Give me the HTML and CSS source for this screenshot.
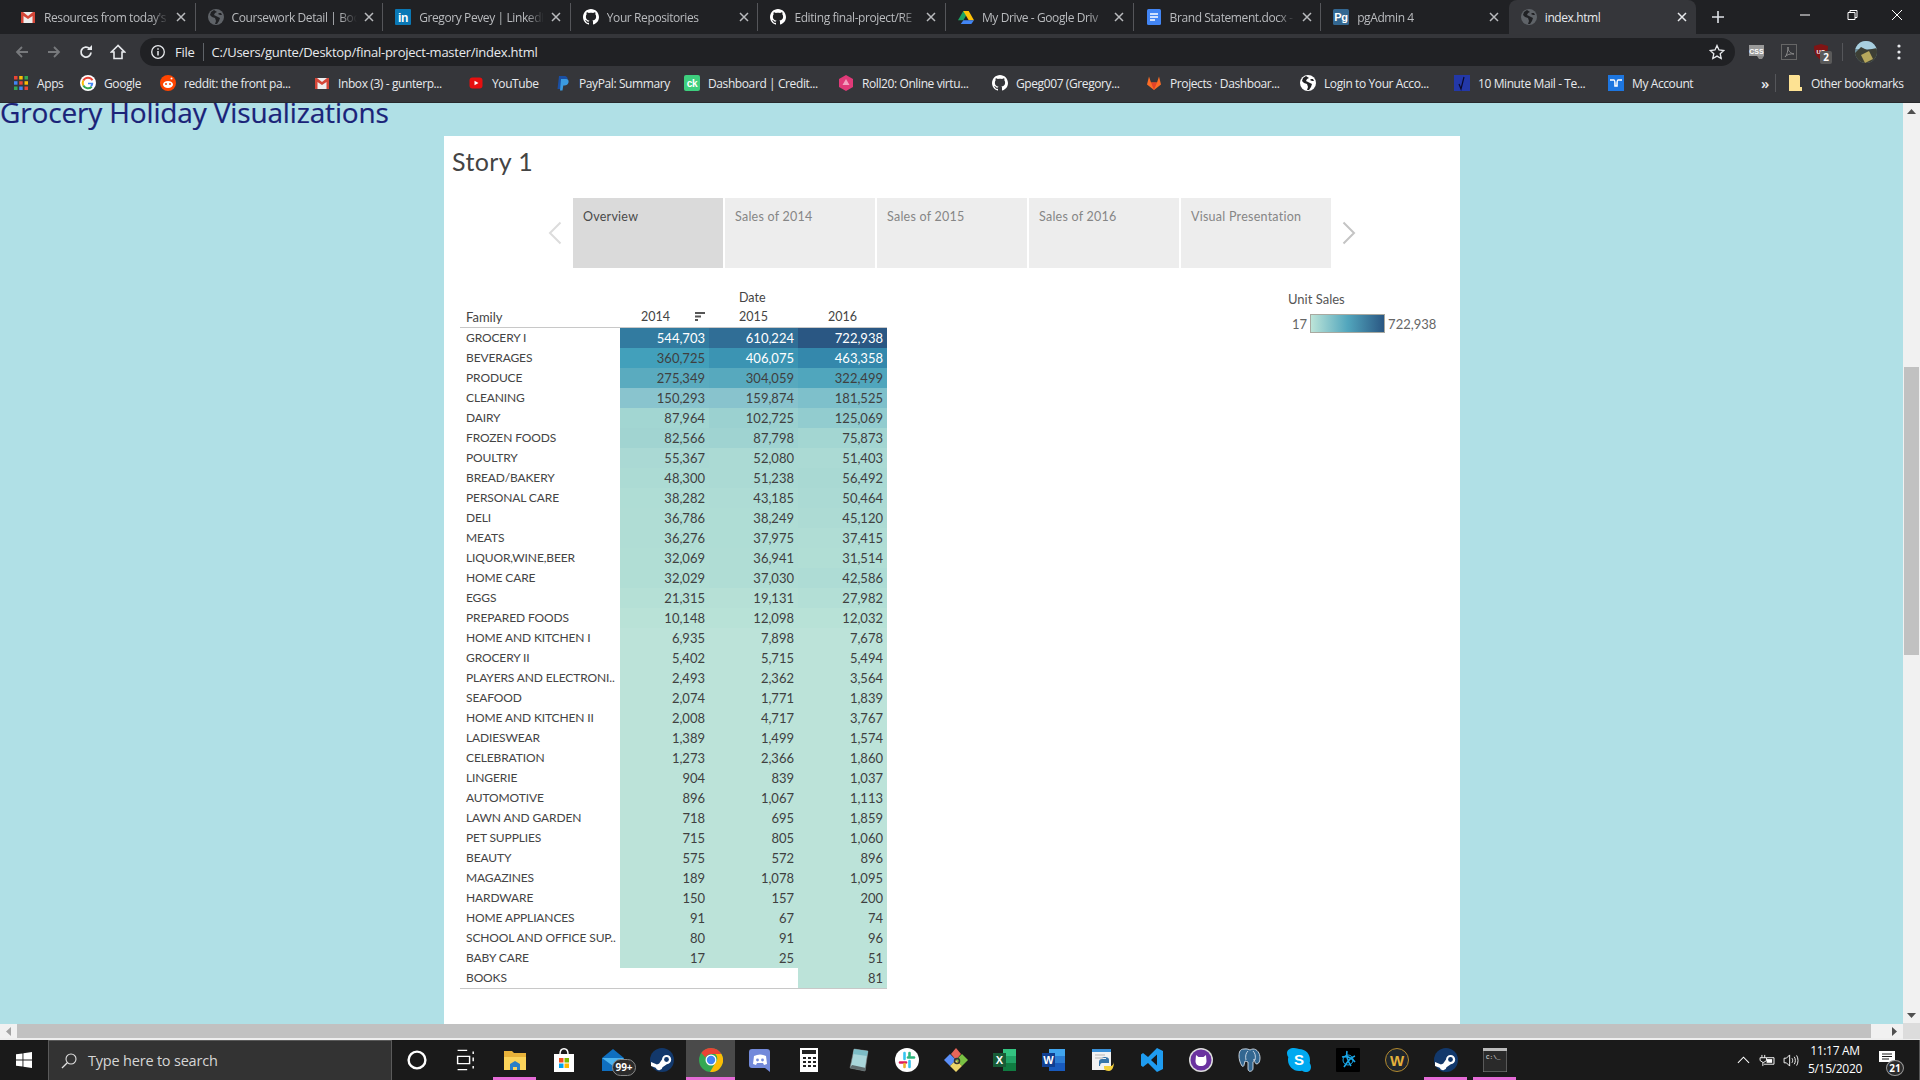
FILE: index.html
```html
<!DOCTYPE html>
<html lang="en">
<head>
<meta charset="utf-8">
<title>index.html</title>
<link rel="stylesheet" href="styles.css">
</head>
<body>
<svg class="defs" width="0" height="0" aria-hidden="true">
  <defs>
    <symbol id="gh" viewBox="0 0 16 16"><path fill="#fff" d="M8 0C3.600 0 0 3.600 0 8c0 3.500 2.300 6.500 5.500 7.600.4.100.5-.2.5-.4v-1.400c-2.200.5-2.700-1.100-2.700-1.100-.4-.9-.9-1.200-.9-1.200-.7-.5.100-.5.100-.5.800.1 1.200.8 1.200.8.700 1.200 1.900.9 2.300.7.100-.5.300-.9.500-1.100-1.800-.2-3.600-.9-3.600-4 0-.9.300-1.600.8-2.100-.1-.2-.4-1 .1-2.100 0 0 .7-.2 2.200.8.600-.2 1.300-.3 2-.3s1.400.1 2 .3c1.500-1 2.200-.8 2.200-.8.400 1.100.2 1.900.1 2.100.5.600.8 1.300.8 2.100 0 3.100-1.900 3.700-3.700 3.900.3.3.6.8.6 1.500v2.200c0 .2.100.5.600.4C13.700 14.500 16 11.500 16 8c0-4.400-3.600-8-8-8z"/></symbol>
    <symbol id="globe" viewBox="0 0 16 16"><circle cx="8" cy="8" r="8" fill="currentColor"/><path fill="#202124" d="M6 1 3 3l-1 3 2 2 3 1 1 3-1 3 2 0 2-3 1-3-4-2-2-1 1-2 2-1zM13 4l-2 0-1 1 2 1 2 0z"/></symbol>
    <symbol id="gmail" viewBox="0 0 16 16"><path fill="#eee" d="M1 3h14v11H1z"/><path fill="#d44638" d="M1 3h2l5 4 5-4h2v11h-2.500V7L8 10 3.500 7v7H1z"/></symbol>
    <symbol id="steam" viewBox="0 0 24 24"><circle cx="12" cy="12" r="12" fill="#12386b"/><path fill="#fff" d="M1 14l6 2.500a3.500 3.500 0 0 1 2-.7l3-4.300a4.600 4.600 0 1 1 4.800 4.700l-4.300 3a3.500 3.500 0 0 1-6.800.6L1 18z"/><circle cx="16.500" cy="11.500" r="2.400" fill="#12386b"/></symbol>
    <symbol id="x" viewBox="0 0 10 10"><path d="M1 1l8 8M9 1l-8 8" stroke="currentColor" stroke-width="1.500" fill="none"/></symbol>
  </defs>
</svg>

<header class="chrome">
  <div class="tabstrip">
    <div class="tab">
      <svg class="fav" viewBox="0 0 16 16"><use href="#gmail"/></svg>
      <span class="tab-title">Resources from today's</span>
      <svg class="tab-x"><use href="#x"/></svg>
    </div>
    <div class="tab">
      <svg class="fav globe-grey" viewBox="0 0 16 16"><use href="#globe"/></svg>
      <span class="tab-title">Coursework Detail | Boo</span>
      <svg class="tab-x"><use href="#x"/></svg>
    </div>
    <div class="tab">
      <svg class="fav" viewBox="0 0 16 16"><rect width="16" height="16" rx="1" fill="#0a78b5"/><text x="8" y="13" class="svg-bold" font-size="12" fill="#fff" text-anchor="middle">in</text></svg>
      <span class="tab-title">Gregory Pevey | LinkedI</span>
      <svg class="tab-x"><use href="#x"/></svg>
    </div>
    <div class="tab">
      <svg class="fav" viewBox="0 0 16 16"><use href="#gh"/></svg>
      <span class="tab-title">Your Repositories</span>
      <svg class="tab-x"><use href="#x"/></svg>
    </div>
    <div class="tab">
      <svg class="fav" viewBox="0 0 16 16"><use href="#gh"/></svg>
      <span class="tab-title">Editing final-project/RE</span>
      <svg class="tab-x"><use href="#x"/></svg>
    </div>
    <div class="tab">
      <svg class="fav" viewBox="0 0 16 16"><path fill="#1ea362" d="M5.300 2h5.400L5.400 11.300H0z"/><path fill="#ffc107" d="M10.700 2 16 11.300h-5.300L5.300 2z"/><path fill="#4285f4" d="M2.700 15 5.400 11.300H16L13.300 15z"/></svg>
      <span class="tab-title">My Drive - Google Driv</span>
      <svg class="tab-x"><use href="#x"/></svg>
    </div>
    <div class="tab">
      <svg class="fav" viewBox="0 0 16 16"><rect x="1" width="14" height="16" rx="1.500" fill="#4285f4"/><path stroke="#fff" stroke-width="1.500" d="M4 5h8M4 8h8M4 11h5"/></svg>
      <span class="tab-title">Brand Statement.docx -</span>
      <svg class="tab-x"><use href="#x"/></svg>
    </div>
    <div class="tab">
      <svg class="fav" viewBox="0 0 16 16"><rect width="16" height="16" rx="1.500" fill="#336791"/><text x="8" y="12" class="svg-bold" font-size="11" fill="#fff" text-anchor="middle">Pg</text></svg>
      <span class="tab-title">pgAdmin 4</span>
      <svg class="tab-x"><use href="#x"/></svg>
    </div>
    <div class="tab tab-active">
      <svg class="fav globe-grey" viewBox="0 0 16 16"><use href="#globe"/></svg>
      <span class="tab-title">index.html</span>
      <svg class="tab-x"><use href="#x"/></svg>
    </div>
    <svg class="newtab" viewBox="0 0 12 12"><path d="M6 0v12M0 6h12" stroke="#dee1e6" stroke-width="1.600"/></svg>
    <div class="winctl">
      <svg viewBox="0 0 46 30"><path d="M18 15h10" stroke="#fff"/></svg>
      <svg viewBox="0 0 46 30"><path d="M20 12.500h7v7h-7zM22 12.500v-2h7v7h-2" stroke="#fff" fill="none"/></svg>
      <svg viewBox="0 0 46 30"><path d="M18 10l10 10M28 10L18 20" stroke="#fff" fill="none"/></svg>
    </div>
  </div>

  <div class="toolbar">
    <div class="navbtns">
      <svg viewBox="0 0 16 16"><path d="M14 8H3M8 3 3 8l5 5" stroke="#77797c" stroke-width="1.800" fill="none"/></svg>
      <svg viewBox="0 0 16 16"><path d="M2 8h11M8 3l5 5-5 5" stroke="#77797c" stroke-width="1.800" fill="none"/></svg>
      <svg viewBox="0 0 16 16"><path d="M13 8.500A5 5 0 1 1 11.500 4.500" stroke="#e8eaed" stroke-width="1.800" fill="none"/><path d="M14 1v5H9z" fill="#e8eaed"/></svg>
      <svg viewBox="0 0 16 16"><path d="M8 1.500 1.500 8H4v6.500h8V8h2.500z" stroke="#e8eaed" stroke-width="1.600" fill="none"/></svg>
    </div>
    <div class="omnibox">
      <svg class="info" viewBox="0 0 16 16"><circle cx="8" cy="8" r="6.300" stroke="#e8eaed" stroke-width="1.300" fill="none"/><path d="M8 7v4.500M8 4.300v1.500" stroke="#e8eaed" stroke-width="1.500"/></svg>
      <span class="om-file">File</span>
      <span class="om-sep"></span>
      <span class="om-url">C:/Users/gunte/Desktop/final-project-master/index.html</span>
      <svg class="star" viewBox="0 0 16 16"><path d="M8 1.500l2 4.500 4.800.5-3.600 3.200 1 4.800L8 12.100l-4.200 2.400 1-4.800L1.200 6.500 6 6z" stroke="#e8eaed" stroke-width="1.300" fill="none"/></svg>
    </div>
    <div class="extensions">
      <svg viewBox="0 0 18 18"><rect x="1" y="2" width="15" height="11" fill="#9a9a9a"/><text x="8.500" y="10.500" class="svg-bold" font-size="7" fill="#fff" text-anchor="middle">CSS</text><path d="M9 13h7l-2 3h-3z" fill="#8a8a8a"/></svg>
      <svg viewBox="0 0 18 18"><rect x="1.500" y="1.500" width="15" height="15" fill="none" stroke="#666"/><path d="M5 14c2-2 3-6 3-10 0 4 2 6 6 7-4-.5-7 .5-9 3z" fill="none" stroke="#8b8b8b"/></svg>
      <div class="ublock">
        <svg viewBox="0 0 18 18"><path d="M9 1l7 2c0 7-2 11-7 14C4 14 2 10 2 3z" fill="#7f1414"/><text x="9" y="11" class="svg-bold" font-size="6" fill="#fff" text-anchor="middle">UO</text></svg>
        <span class="ublock-badge">2</span>
      </div>
      <span class="ext-sep"></span>
      <svg class="avatar" viewBox="0 0 22 22"><defs><clipPath id="av"><circle cx="11" cy="11" r="11"/></clipPath></defs><g clip-path="url(#av)"><rect width="22" height="22" fill="#6f8f9c"/><path d="M0 0h22v8H0z" fill="#a8cfe0"/><path d="M0 12l6-6 6 3 10-2v15H0z" fill="#3d3f35"/><path d="M6 14l8-4 4 8-8 4z" fill="#b7a85c"/></g></svg>
      <svg class="dots" viewBox="0 0 4 16"><circle cx="2" cy="2" r="1.600" fill="#e8eaed"/><circle cx="2" cy="8" r="1.600" fill="#e8eaed"/><circle cx="2" cy="14" r="1.600" fill="#e8eaed"/></svg>
    </div>
  </div>

  <nav class="bookmarks">
    <a class="bm bm-apps"><svg viewBox="0 0 16 16"><path fill="#ea4335" d="M1 1h3.500v3.500H1z"/><path fill="#fbbc05" d="M6.200 1h3.500v3.500H6.200z"/><path fill="#34a853" d="M11.500 1H15v3.500h-3.500z"/><path fill="#4285f4" d="M1 6.200h3.500v3.500H1z"/><path fill="#ea4335" d="M6.200 6.200h3.500v3.500H6.200z"/><path fill="#fbbc05" d="M11.500 6.200H15v3.500h-3.500z"/><path fill="#34a853" d="M1 11.500h3.500V15H1z"/><path fill="#4285f4" d="M6.200 11.500h3.500V15H6.200z"/><path fill="#ea4335" d="M11.500 11.500H15V15h-3.500z"/></svg><span>Apps</span></a>
    <a class="bm bm-google"><svg viewBox="0 0 16 16"><circle cx="8" cy="8" r="8" fill="#fff"/><path d="M12.500 5.200A5.300 5.300 0 0 0 3.300 5.500" stroke="#ea4335" stroke-width="2" fill="none"/><path d="M3.300 5.500a5.300 5.300 0 0 0 0 5" stroke="#fbbc05" stroke-width="2" fill="none"/><path d="M3.300 10.500a5.300 5.300 0 0 0 8.400 1.200" stroke="#34a853" stroke-width="2" fill="none"/><path d="M8 7.800h5.200c.1 1.600-.4 3-1.500 3.900L10.300 10.500c.5-.4.800-.8.900-1.200H8z" fill="#4285f4"/></svg><span>Google</span></a>
    <a class="bm bm-std"><svg viewBox="0 0 16 16"><circle cx="8" cy="8" r="8" fill="#ff4500"/><ellipse cx="8" cy="9.500" rx="5" ry="3.500" fill="#fff"/><circle cx="6" cy="9" r="1" fill="#ff4500"/><circle cx="10" cy="9" r="1" fill="#ff4500"/><circle cx="11.500" cy="3.500" r="1" fill="#fff"/></svg><span>reddit: the front pa...</span></a>
    <a class="bm bm-std"><svg viewBox="0 0 16 16"><use href="#gmail"/></svg><span>Inbox (3) - gunterp...</span></a>
    <a class="bm bm-yt"><svg viewBox="0 0 16 16"><rect x="1.500" y="2.500" width="13" height="11" rx="3" fill="#e60f0f"/><path d="M6.500 5.700 10.500 8l-4 2.300z" fill="#fff"/></svg><span>YouTube</span></a>
    <a class="bm bm-pp"><svg viewBox="0 0 16 16"><path d="M4 1h5c3 0 4 2 3.500 4S10 8 8 8H6.500L5.500 14H2.500z" fill="#1a4fa3"/><path d="M6 4h5c2 0 3 1.500 2.500 3.500S11.500 10.500 9.500 10.500H8.300L7.500 15.500H5z" fill="#3b9be0"/></svg><span>PayPal: Summary</span></a>
    <a class="bm bm-std"><svg viewBox="0 0 16 16"><rect width="16" height="16" rx="2" fill="#3ecf7e"/><text x="8" y="12" class="svg-bold" font-size="10" fill="#fff" text-anchor="middle">ck</text></svg><span>Dashboard | Credit...</span></a>
    <a class="bm bm-std"><svg viewBox="0 0 16 16"><path d="M8 0l7 4v8l-7 4-7-4V4z" fill="#e03a78"/><path d="M8 4l3.500 6h-7z" fill="#f2a1bf"/></svg><span>Roll20: Online virtu...</span></a>
    <a class="bm bm-std"><svg viewBox="0 0 16 16"><use href="#gh"/></svg><span>Gpeg007 (Gregory...</span></a>
    <a class="bm bm-std"><svg viewBox="0 0 16 16"><path d="M8 15 1 9.500 3 1.500l2 6h6l2-6 2 8z" fill="#fc6d26"/><path d="M8 15 5 7.500h6z" fill="#e24329"/></svg><span>Projects · Dashboar...</span></a>
    <a class="bm bm-std"><svg viewBox="0 0 16 16"><use href="#globe" color="#fff"/></svg><span>Login to Your Acco...</span></a>
    <a class="bm bm-std"><svg viewBox="0 0 16 16"><rect width="16" height="16" fill="#2338a8"/><path d="M5 9l2 5 3-12" stroke="#0a0a2a" fill="none" stroke-width="1.200"/></svg><span>10 Minute Mail - Te...</span></a>
    <a class="bm bm-acc"><svg viewBox="0 0 16 16"><rect width="16" height="16" fill="#1d76e0"/><path d="M2 5h4c1 0 1 3 1 6h2c0-3 0-6 1-6h4" stroke="#fff" stroke-width="1.600" fill="none"/></svg><span>My Account</span></a>
    <span class="bm-more">»</span>
    <span class="bm-sep"></span>
    <a class="bm bm-other"><svg viewBox="0 0 16 16"><path d="M2 0h10l1 1v11h2v4H2z" fill="#fde293"/></svg><span>Other bookmarks</span></a>
  </nav>
</header>

<div class="viewport">
  <main class="page">
    <h1 class="heading">Grocery Holiday Visualizations</h1>
    <section class="story">
      <h2 class="story-title">Story 1</h2>
      <div class="story-nav">
        <svg class="chev" viewBox="0 0 14 24"><path d="M12.500 1.500 2 12l10.500 10.500" stroke="#dcdcdc" stroke-width="2" fill="none"/></svg>
        <div class="story-tab story-tab-on">Overview</div>
        <div class="story-tab">Sales of 2014</div>
        <div class="story-tab">Sales of 2015</div>
        <div class="story-tab">Sales of 2016</div>
        <div class="story-tab">Visual Presentation</div>
        <svg class="chev" viewBox="0 0 14 24"><path d="M1.500 1.500 12 12 1.500 22.500" stroke="#c4c4c4" stroke-width="2" fill="none"/></svg>
      </div>
      <div class="story-body">
        <table class="crosstab">
          <colgroup><col class="col-l"><col class="col-n"><col class="col-n"><col class="col-n"></colgroup>
          <thead>
            <tr class="hdr-top"><th></th><th></th><th class="yr">Date</th><th></th></tr>
            <tr class="hdr-bot">
              <th class="fam">Family</th>
              <th class="yr yr14">2014<svg class="sort" viewBox="0 0 10 9"><path d="M0 0h10v2H0zM0 3.500h6v2H0zM0 7h3v2H0z" fill="#555"/></svg></th>
              <th class="yr">2015</th>
              <th class="yr yr16">2016</th>
            </tr>
          </thead>
          <tbody>
            <tr><td>GROCERY I</td><td class="lt" style="background:#327ba0">544,703</td><td class="lt" style="background:#306e96">610,224</td><td class="lt" style="background:#2a5783">722,938</td></tr>
            <tr><td>BEVERAGES</td><td style="background:#42a0bb">360,725</td><td class="lt" style="background:#3b94b3">406,075</td><td class="lt" style="background:#3488ac">463,358</td></tr>
            <tr><td>PRODUCE</td><td style="background:#5aabbf">275,349</td><td style="background:#57a9be">304,059</td><td style="background:#50a6bd">322,499</td></tr>
            <tr><td>CLEANING</td><td style="background:#89c4ce">150,293</td><td style="background:#88c3cd">159,874</td><td style="background:#7ec0cb">181,525</td></tr>
            <tr><td>DAIRY</td><td style="background:#a2d6d2">87,964</td><td style="background:#9bd1d0">102,725</td><td style="background:#92cccf">125,069</td></tr>
            <tr><td>FROZEN FOODS</td><td style="background:#a1d4d1">82,566</td><td style="background:#9fd3d1">87,798</td><td style="background:#a3d6d2">75,873</td></tr>
            <tr><td>POULTRY</td><td style="background:#aad9d4">55,367</td><td style="background:#abdad4">52,080</td><td style="background:#abdad4">51,403</td></tr>
            <tr><td>BREAD/BAKERY</td><td style="background:#acdbd4">48,300</td><td style="background:#abdad4">51,238</td><td style="background:#a9d9d3">56,492</td></tr>
            <tr><td>PERSONAL CARE</td><td style="background:#afddd5">38,282</td><td style="background:#aedcd5">43,185</td><td style="background:#abdad4">50,464</td></tr>
            <tr><td>DELI</td><td style="background:#b0ddd5">36,786</td><td style="background:#afddd5">38,249</td><td style="background:#addbd4">45,120</td></tr>
            <tr><td>MEATS</td><td style="background:#b0ddd5">36,276</td><td style="background:#afddd5">37,975</td><td style="background:#b0ddd5">37,415</td></tr>
            <tr><td>LIQUOR,WINE,BEER</td><td style="background:#b1ded5">32,069</td><td style="background:#b0ddd5">36,941</td><td style="background:#b1ded5">31,514</td></tr>
            <tr><td>HOME CARE</td><td style="background:#b1ded5">32,029</td><td style="background:#b0ddd5">37,030</td><td style="background:#aedcd5">42,586</td></tr>
            <tr><td>EGGS</td><td style="background:#b5e0d6">21,315</td><td style="background:#b6e0d6">19,131</td><td style="background:#b3dfd6">27,982</td></tr>
            <tr><td>PREPARED FOODS</td><td style="background:#b9e2d7">10,148</td><td style="background:#b8e2d7">12,098</td><td style="background:#b8e2d7">12,032</td></tr>
            <tr><td>HOME AND KITCHEN I</td><td class="lo">6,935</td><td class="lo">7,898</td><td class="lo">7,678</td></tr>
            <tr><td>GROCERY II</td><td class="lo">5,402</td><td class="lo">5,715</td><td class="lo">5,494</td></tr>
            <tr><td>PLAYERS AND ELECTRONI..</td><td class="lo">2,493</td><td class="lo">2,362</td><td class="lo">3,564</td></tr>
            <tr><td>SEAFOOD</td><td class="lo">2,074</td><td class="lo">1,771</td><td class="lo">1,839</td></tr>
            <tr><td>HOME AND KITCHEN II</td><td class="lo">2,008</td><td class="lo">4,717</td><td class="lo">3,767</td></tr>
            <tr><td>LADIESWEAR</td><td class="lo">1,389</td><td class="lo">1,499</td><td class="lo">1,574</td></tr>
            <tr><td>CELEBRATION</td><td class="lo">1,273</td><td class="lo">2,366</td><td class="lo">1,860</td></tr>
            <tr><td>LINGERIE</td><td class="lo">904</td><td class="lo">839</td><td class="lo">1,037</td></tr>
            <tr><td>AUTOMOTIVE</td><td class="lo">896</td><td class="lo">1,067</td><td class="lo">1,113</td></tr>
            <tr><td>LAWN AND GARDEN</td><td class="lo">718</td><td class="lo">695</td><td class="lo">1,859</td></tr>
            <tr><td>PET SUPPLIES</td><td class="lo">715</td><td class="lo">805</td><td class="lo">1,060</td></tr>
            <tr><td>BEAUTY</td><td class="lo">575</td><td class="lo">572</td><td class="lo">896</td></tr>
            <tr><td>MAGAZINES</td><td class="lo">189</td><td class="lo">1,078</td><td class="lo">1,095</td></tr>
            <tr><td>HARDWARE</td><td class="lo">150</td><td class="lo">157</td><td class="lo">200</td></tr>
            <tr><td>HOME APPLIANCES</td><td class="lo">91</td><td class="lo">67</td><td class="lo">74</td></tr>
            <tr><td>SCHOOL AND OFFICE SUP..</td><td class="lo">80</td><td class="lo">91</td><td class="lo">96</td></tr>
            <tr><td>BABY CARE</td><td class="lo">17</td><td class="lo">25</td><td class="lo">51</td></tr>
            <tr><td>BOOKS</td><td></td><td></td><td class="lo">81</td></tr>
          </tbody>
        </table>
        <aside class="legend">
          <div class="legend-title">Unit Sales</div>
          <div class="legend-row"><span>17</span><span class="legend-bar"></span><span>722,938</span></div>
        </aside>
      </div>
    </section>
  </main>
  <div class="vscroll">
    <svg class="sb-arrow" viewBox="0 0 9 5"><path d="M4.500 0 9 5H0z" fill="#505050"/></svg>
    <div class="vthumb"></div>
    <svg class="sb-arrow" viewBox="0 0 9 5"><path d="M4.500 5 9 0H0z" fill="#505050"/></svg>
  </div>
</div>
<div class="hscroll">
  <svg class="sb-arrow-h" viewBox="0 0 5 9"><path d="M0 4.500 5 0v9z" fill="#a3a3a3"/></svg>
  <div class="hthumb"></div>
  <svg class="sb-arrow-h" viewBox="0 0 5 9"><path d="M5 4.500 0 0v9z" fill="#505050"/></svg>
  <div class="sb-corner"></div>
</div>

<footer class="taskbar">
  <svg class="win" viewBox="0 0 16 16"><path fill="#fff" d="M0 2.300 6.500 1.400v6.200H0zM7.400 1.300 16 0v7.600H7.400zM0 8.400h6.500v6.200L0 13.700zM7.400 8.400H16V16l-8.600-1.200z"/></svg>
  <div class="search">
    <svg viewBox="0 0 16 16"><circle cx="10" cy="6" r="5" stroke="#e0e0e0" stroke-width="1.100" fill="none"/><path d="M6.300 9.700 1 15" stroke="#e0e0e0" stroke-width="1.300"/></svg>
    <span>Type here to search</span>
  </div>
  <div class="tb-apps">
    <div class="tb"><svg viewBox="0 0 20 20"><circle cx="10" cy="10" r="7" stroke="#fff" stroke-width="2" fill="none"/></svg></div>
    <div class="tb"><svg viewBox="0 0 20 20"><path d="M3 2h8M3 18h8M3 7h10v6H3zM16 3v2M16 8v3M16 15v2" stroke="#fff" fill="none" stroke-width="1.200"/></svg></div>
    <div class="tb tb-run"><svg viewBox="0 0 24 24"><path d="M1 3h8l2 2h12v17H1z" fill="#e8b23a"/><path d="M1 9h22v13H1z" fill="#fbd35a"/><path d="M7 22v-6l5-3 5 3v6h-3v-3h-4v3z" fill="#2b7fc6"/></svg></div>
    <div class="tb"><svg viewBox="0 0 24 24"><path d="M2 6h20v18H2z" fill="#fff"/><path d="M8 6c0-7 8-7 8 0" stroke="#fff" stroke-width="1.500" fill="none"/><path fill="#f25022" d="M7 10h4.500v4.500H7z"/><path fill="#7fba00" d="M12.500 10H17v4.500h-4.500z"/><path fill="#00a4ef" d="M7 15.500h4.500V20H7z"/><path fill="#ffb900" d="M12.500 15.500H17V20h-4.500z"/></svg></div>
    <div class="tb"><svg viewBox="0 0 24 24"><path d="M1 10 12 1l11 9v13H1z" fill="#0f6fc0"/><path d="M1 10h22L12 18z" fill="#4cb4f0"/></svg><span class="tb-badge">99+</span></div>
    <div class="tb"><svg viewBox="0 0 24 24"><use href="#steam"/></svg></div>
    <div class="tb tb-active"><svg viewBox="0 0 24 24"><circle cx="12" cy="12" r="12" fill="#34a853"/><path d="M12 0a12 12 0 0 1 10.400 6H12a6 6 0 0 0-5.500 3.500L2.300 5A12 12 0 0 1 12 0z" fill="#ea4335"/><path d="M22.400 6A12 12 0 0 1 11 24l5.300-9a6 6 0 0 0 0-9z" fill="#fbbc05"/><circle cx="12" cy="12" r="5.500" fill="#fff"/><circle cx="12" cy="12" r="4.200" fill="#4285f4"/></svg></div>
    <div class="tb"><svg viewBox="0 0 24 24"><path d="M4 1h15a3 3 0 0 1 3 3v20l-5-4H4a3 3 0 0 1-3-3V4a3 3 0 0 1 3-3z" fill="#7289da"/><path d="M6 8c4-2 8-2 12 0l1 8-3 1-1-2H9l-1 2-3-1z" fill="#fff"/><circle cx="9.500" cy="12" r="1.400" fill="#7289da"/><circle cx="14.500" cy="12" r="1.400" fill="#7289da"/></svg></div>
    <div class="tb"><svg viewBox="0 0 24 24"><path d="M3 0h18v24H3z" fill="#fff"/><path d="M5 2h14v4H5z" fill="#222"/><path d="M6 9h3v2H6zM11 9h3v2h-3zM16 9h3v2h-3zM6 13h3v2H6zM11 13h3v2h-3zM16 13h3v2h-3zM6 17h3v2H6zM11 17h3v2h-3zM16 17h3v2h-3z" fill="#222"/></svg></div>
    <div class="tb"><svg viewBox="0 0 24 24"><path d="M8 1l14 2-3 20-15-3z" fill="#a9d6da" stroke="#7a7a7a" stroke-width=".6"/><path d="M4 20l15 3 1-3-14-3z" fill="#5e6a6c"/><path d="M8 1l14 2-1 5L7 6z" fill="#7cbcc6"/></svg></div>
    <div class="tb"><svg viewBox="0 0 24 24"><circle cx="12" cy="12" r="12" fill="#fff"/><path d="M9.500 5v6M14.500 13v6" stroke="#36c5f0" stroke-width="2.600" stroke-linecap="round"/><path d="M13 9.500h6" stroke="#2eb67d" stroke-width="2.600" stroke-linecap="round"/><path d="M5 14.500h6" stroke="#e01e5a" stroke-width="2.600" stroke-linecap="round"/><path d="M14.500 5v3" stroke="#2eb67d" stroke-width="2.600" stroke-linecap="round"/><path d="M9.500 16v3" stroke="#ecb22e" stroke-width="2.600" stroke-linecap="round"/></svg></div>
    <div class="tb"><svg viewBox="0 0 24 24"><path d="M12 0l5 6-5 6-5-6z" fill="#e8665a"/><path d="M0 12l6-6 6 6-6 6z" fill="#5b8ff9"/><path d="M12 12l6-6 6 6-6 6z" fill="#7ac143"/><path d="M6 18l6-6 6 6-6 6z" fill="#ecd56a"/><circle cx="13" cy="13" r="2.500" fill="none" stroke="#333" stroke-width="1.500"/></svg></div>
    <div class="tb"><svg viewBox="0 0 24 24"><path d="M10 1h13v22H10z" fill="#21a366"/><path d="M10 1h13v7H10z" fill="#33c481"/><path d="M10 15h13v8H10z" fill="#107c41"/><rect y="5" width="13" height="14" fill="#185c37"/><text x="6.500" y="16" class="svg-bold" font-size="11" fill="#fff" text-anchor="middle">X</text></svg></div>
    <div class="tb"><svg viewBox="0 0 24 24"><path d="M7 1h16v22H7z" fill="#2b7cd3"/><path d="M7 1h16v7H7z" fill="#41a5ee"/><path d="M7 15h16v8H7z" fill="#185abd"/><rect y="5" width="13" height="14" fill="#103f91"/><text x="6.500" y="16" class="svg-bold" font-size="11" fill="#fff" text-anchor="middle">W</text></svg></div>
    <div class="tb"><svg viewBox="0 0 24 24"><path d="M1 1h19v21H1z" fill="#f2f2f2"/><path d="M1 1h19v3H1z" fill="#3a8fd6"/><path d="M4 7h10M4 10h8" stroke="#b5b5b5"/><path d="M13 9c4 0 5 1 5 3v3h-7c-1 0-2 1-2 3h-1v-4c0-2 1-3 3-3h4v-1h-4z" fill="#3776ab"/><path d="M23 14c0 5-2 9-5 9s-5-1-5-3v-2h7c1 0 3-2 3-4z" fill="#f5d23d"/></svg></div>
    <div class="tb"><svg viewBox="0 0 24 24"><path d="M17 0l6 3v18l-6 3-9-9-5 4-2-1.500v-11L3 5l5 4z" fill="#1f9cf0"/><path d="M17 6.500 11 12l6 5.500z" fill="#191919"/></svg></div>
    <div class="tb"><svg viewBox="0 0 24 24"><circle cx="12" cy="12" r="12" fill="#ddd"/><circle cx="12" cy="12" r="10.500" fill="#6a329f"/><path d="M7 7l2.500 2h5L17 7l.5 6c0 3-2 5-5.500 5s-5.500-2-5.500-5z" fill="#fff"/></svg></div>
    <div class="tb"><svg viewBox="0 0 24 24"><path d="M6 1C2 1 1 4 1 8c0 3 1 7 3 10 1 1 2 0 2-1l1-4c1 0 2 1 3 1v7c0 2 2 3 3 2 1 0 2-1 2-3v-6c1-1 1-2 1-3 1 3 1 5 3 5 2-.5 3-3 3-6 0-5-3-9-7-9-1 0-2 .5-3 1-1-.5-3-1.500-6-1z" fill="#336791" stroke="#d5dee8" stroke-width=".9"/><path d="M10 3c-2 2-3 5-2 9M15 3c2 2 3 5 2 9" fill="none" stroke="#d5dee8" stroke-width=".9"/></svg></div>
    <div class="tb"><svg viewBox="0 0 24 24"><path d="M7 0c3 0 4 1 5 1 7 0 11 5 11 11 0 1 0 2-.3 3 .8 1 1.300 3 1.300 4 0 3-2 5-5 5-1 0-3-.5-4-1.300-1 .3-2 .3-3 .3C6 23 1 18 1 12c0-1 0-2 .3-3C.5 8 0 6.500 0 5c0-3 3-5 7-5z" fill="#00a9f0"/><text x="12" y="17" class="svg-bold" font-size="15" fill="#fff" text-anchor="middle">S</text></svg></div>
    <div class="tb"><svg viewBox="0 0 24 24"><rect width="24" height="24" rx="1" fill="#000"/><path d="M11 3c-1 4 0 9 4 15M6 9c4-1 9 0 13 5M19 8c-3 1-8 6-11 11" fill="none" stroke="#1aa7e8" stroke-width="1.600"/><circle cx="12" cy="12" r="5" fill="none" stroke="#1aa7e8"/></svg></div>
    <div class="tb"><svg viewBox="0 0 24 24"><circle cx="12" cy="12" r="11.500" fill="#20262c" stroke="#b48a2e"/><text x="12" y="17.500" class="svg-bold" font-size="15" fill="#e4b23c" text-anchor="middle">W</text></svg></div>
    <div class="tb tb-run2"><svg viewBox="0 0 24 24"><use href="#steam"/></svg></div>
    <div class="tb tb-run2"><svg viewBox="0 0 24 24"><rect width="24" height="24" fill="#2a2a2a" stroke="#888"/><rect y="0" width="24" height="3" fill="#bbb"/><text x="3" y="11" font-size="6" class="svg-mono" fill="#eee">C:\_</text></svg></div>
  </div>
  <div class="tray">
    <svg viewBox="0 0 14 8" class="tray-caret"><path d="M1 7l6-6 6 6" stroke="#fff" fill="none" stroke-width="1.100"/></svg>
    <svg viewBox="0 0 18 14" class="tray-bat"><path d="M3 1v3M6 1v3M1 4h7v3l-3 2H4L1 7zM4 9v4" stroke="#fff" fill="none"/><path d="M8 4h8v7H5" stroke="#fff" fill="none"/><path d="M8 5.500h6v4H8z" fill="#fff"/></svg>
    <svg viewBox="0 0 18 14" class="tray-vol"><path d="M1 4.500h2.500L7 1v12L3.500 9.500H1z" stroke="#fff" fill="none"/><path d="M9.500 4.500c1 1.500 1 3.500 0 5M12 3c1.500 2.500 1.500 5.500 0 8M14.500 1.500c2 3 2 8 0 11" stroke="#fff" fill="none"/></svg>
    <div class="clock"><span>11:17 AM</span><span>5/15/2020</span></div>
    <div class="notif">
      <svg viewBox="0 0 16 14"><path d="M0 0h16v11H0z" fill="#fff"/><path d="M3 3h10M3 5.500h10M3 8h7" stroke="#1a1a1a"/></svg>
      <span class="notif-badge">21</span>
    </div>
  </div>
</footer>
</body>
</html>
```

FILE: styles.css
```css
* { box-sizing: border-box; }
html, body { margin: 0; height: 100%; overflow: hidden; }
body { display: flex; flex-direction: column; height: 1080px; font-family: "Open Sans", "Noto Sans", sans-serif; background: #1a1a1a; }
.defs { position: absolute; }
svg { display: block; flex: none; }
.svg-bold { font-family: "Liberation Sans", sans-serif; font-weight: 700; }
.svg-mono { font-family: "Liberation Mono", monospace; }

/* browser chrome */
.chrome { flex: none; height: 103px; background: #35363a; border-bottom: 1px solid #28292c; display: flex; flex-direction: column; }
.tabstrip { height: 34px; flex: none; background: #202124; display: flex; align-items: stretch; padding-left: 8px; position: relative; }
.tab { width: 187.600px; flex: none; display: flex; align-items: center; padding-left: 12px; color: #b9bbbe; border-right: 1px solid #55565a; position: relative; height: 28px; margin-top: 3px; font-size: 12px; letter-spacing: -.4px; }
.tab:nth-child(8) { border-right: none; }
.tab-title { width: 125px; margin-left: 8px; white-space: nowrap; overflow: hidden; -webkit-mask-image: linear-gradient(90deg, #000 86%, transparent); mask-image: linear-gradient(90deg, #000 86%, transparent); }
.fav { width: 16px; height: 16px; }
.globe-grey { color: #5f6368; }
.tab-x { width: 10px; height: 10px; margin-left: 7px; color: #b9bbbe; }
.tab-active { background: #35363a; color: #e8eaed; border: 0; height: 34px; margin-top: 0; border-radius: 8px 8px 0 0; }
.tab-active .tab-x { color: #e8eaed; }
.tab-active .tab-title { -webkit-mask-image: none; mask-image: none; }
.newtab { width: 12px; height: 12px; align-self: center; margin-left: 16px; }
.winctl { margin-left: auto; display: flex; align-items: flex-start; }
.winctl svg { width: 46px; height: 30px; }

.toolbar { height: 32px; flex: none; display: flex; align-items: flex-end; }
.navbtns { display: flex; width: 140px; height: 28px; align-items: center; padding-left: 14px; gap: 16px; }
.navbtns svg { width: 16px; height: 16px; }
.omnibox { width: 1595px; height: 28px; background: #202124; border-radius: 14px; display: flex; align-items: center; padding-left: 10px; padding-right: 10px; color: #e8eaed; font-size: 13px; letter-spacing: -.25px; }
.info { width: 16px; height: 16px; }
.om-file { margin-left: 9px; }
.om-sep { width: 1px; height: 18px; background: #5f6368; margin: 0 8px 0 8px; }
.star { width: 16px; height: 16px; margin-left: auto; }
.extensions { flex: 1; height: 28px; display: flex; align-items: center; padding-left: 13px; position: relative; }
.extensions > svg { width: 18px; height: 18px; margin-right: 14px; }
.ublock { position: relative; width: 18px; height: 18px; margin-right: 12px; }
.ublock svg { width: 18px; height: 18px; }
.ublock-badge { position: absolute; left: 8px; top: 8px; width: 12px; height: 13px; background: #5a5a5a; border-radius: 2px; color: #fff; font-size: 10px; font-weight: 700; line-height: 13px; text-align: center; }
.ext-sep { width: 1px; height: 18px; background: #55565a; margin-right: 12px; }
.extensions > .avatar { width: 22px; height: 22px; margin-right: 20px; }
.extensions > .dots { width: 4px; height: 16px; margin: 0; }

.bookmarks { height: 34px; margin-bottom: 2px; flex: none; display: flex; align-items: center; padding-left: 13px; color: #e8eaed; font-size: 12px; letter-spacing: -.4px; }
.bm { display: flex; align-items: center; gap: 8px; flex: none; white-space: nowrap; }
.bm svg { width: 16px; height: 16px; }
.bm-apps { width: 67px; }
.bm-google { width: 80px; }
.bm-std { width: 154px; }
.bm-yt { width: 87px; }
.bm-pp { width: 129px; }
.bm-acc { width: 153px; }
.bm-more { width: 14px; font-size: 15px; font-weight: 600; line-height: 16px; }
.bm-sep { width: 1px; height: 18px; background: #55565a; margin-right: 11px; }

/* page */
.viewport { height: 921px; flex: none; display: flex; }
.page { flex: 1; min-width: 0; background: #b0e0e6; overflow: hidden; }
.heading { margin: -5px 0 0 0; padding-bottom: 0; height: 38px; font-size: 28px; line-height: 28px; font-weight: 400; color: #1a2378; -webkit-text-stroke: .2px #1a2378; letter-spacing: -.15px; }
.story { width: 1016px; margin-left: 444px; height: 900px; background: #fff; color: #333; font-family: Lato, sans-serif; overflow: hidden; }
.story-title { margin: 0; padding: 9px 0 0 8px; height: 62px; font-size: 25px; line-height: 32px; font-weight: 400; color: #444; letter-spacing: .4px; }
.story-nav { display: flex; gap: 2px; align-items: center; height: 70px; padding-left: 104px; }
.chev { width: 14px; height: 24px; margin-right: 9px; }
.story-nav .chev:last-child { margin: 0 0 0 9px; }
.story-tab { width: 150px; height: 70px; background: #ededed; color: #868686; font-size: 12.500px; padding: 11px 10px; letter-spacing: .25px; }
.story-tab-on { background: #dadada; color: #4a4a4a; }
.story-body { display: flex; padding: 19px 0 0 16px; }
.crosstab { border-collapse: collapse; table-layout: fixed; width: 427px; font-size: 13px; flex: none; }
.col-l { width: 160px; }
.col-n { width: 89px; }
.crosstab th { font-weight: 400; text-align: left; padding: 0; color: #444; white-space: nowrap; font-size: 12.500px; }
.hdr-top th { height: 20px; }
.hdr-bot th { height: 20px; border-bottom: 1px solid #c8c8c8; }
.crosstab .fam { padding-left: 6px; font-size: 13px; }
.crosstab .yr { padding-left: 30px; }
.crosstab .yr14 { padding-left: 21px; position: relative; }
.crosstab .yr16 { padding-left: 30px; }
.sort { position: absolute; left: 75px; top: 5px; width: 10px; height: 9px; }
.crosstab td { height: 20px; padding: 0 4px 0 0; line-height: 20px; text-align: right; color: #3f3f3f; white-space: nowrap; overflow: hidden; }
.crosstab td:first-child { text-align: left; padding-left: 6px; color: #444; font-size: 12px; letter-spacing: -.12px; }
.crosstab tbody { border-bottom: 1px solid #c8c8c8; }
.crosstab .lo { background: #bce3d9; }
.crosstab .lt { color: #fff; }
.legend { margin-left: 401px; font-size: 13px; color: #555; }
.legend-title { height: 20px; line-height: 20px; margin-top: 2px; }
.legend-row { display: flex; align-items: center; gap: 3px; color: #666; margin-top: 5px; padding-left: 4px; }
.legend-bar { width: 75px; height: 19px; border: 1px solid #a9a9a0; background: linear-gradient(90deg, #bce4d8, #52a6bd 50%, #2a5783); }

/* scrollbars */
.vscroll { width: 17px; flex: none; background: #f1f1f1; display: flex; flex-direction: column; align-items: center; }
.sb-arrow { width: 9px; height: 5px; margin: 6px 0; }
.vthumb { width: 15px; height: 288px; background: #c1c1c1; margin-top: 247px; margin-bottom: auto; }
.hscroll { height: 16px; flex: none; background: #f1f1f1; display: flex; align-items: center; border-bottom: 2px solid #eee; }
.sb-arrow-h { width: 5px; height: 9px; margin: 0 6px; }
.hthumb { width: 1854px; height: 14px; background: #c1c1c1; }
.hscroll .sb-arrow-h:nth-of-type(2) { margin-left: 21px; margin-right: 6px; }
.sb-corner { width: 17px; height: 16px; background: #dcdcdc; margin-left: auto; }

/* taskbar */
.taskbar { height: 40px; flex: none; background: #1a1a1a; display: flex; align-items: center; position: relative; color: #fff; }
.win { width: 16px; height: 16px; margin-left: 16px; }
.search { margin-left: 16px; width: 344px; height: 40px; background: #333; border: 1px solid #5a5a5a; border-bottom: 0; display: flex; align-items: center; padding-left: 12px; color: #d6d6d6; font-size: 14.500px; letter-spacing: -.2px; }
.search svg { width: 16px; height: 16px; margin-right: 11px; }
.tb-apps { display: flex; }
.tb { width: 49px; height: 40px; flex: none; display: flex; align-items: center; justify-content: center; position: relative; }
.tb svg { width: 24px; height: 24px; }
.tb-active { background: #4a4a4a; }
.tb-active::after, .tb-run::after, .tb-run2::after { content: ""; position: absolute; left: 3px; right: 3px; bottom: 0; height: 3px; background: #e56bd6; }
.tb-active::after { left: 0; right: 0; }
.tb-badge { position: absolute; left: 24px; top: 19px; height: 17px; min-width: 24px; padding: 0 2px; border-radius: 9px; background: #2b2b2b; border: 1px solid #888; color: #fff; font-size: 10px; line-height: 15px; font-weight: 700; text-align: center; }
.tray { margin-left: auto; display: flex; align-items: center; height: 40px; padding-right: 10px; border-right: 1px solid #555; }
.tray-caret { width: 13px; height: 8px; margin-right: 9px; }
.tray-bat { width: 17px; height: 13px; margin-right: 7px; }
.tray-vol { width: 17px; height: 13px; margin-right: 6px; }
.clock { display: flex; flex-direction: column; align-items: center; width: 58px; font-size: 12px; line-height: 18px; color: #fff; letter-spacing: -.3px; }
.notif { width: 30px; margin-left: 15px; position: relative; height: 40px; display: flex; align-items: center; }
.notif svg { width: 16px; height: 14px; margin-top: -4px; }
.notif-badge { position: absolute; left: 7px; top: 20px; width: 18px; height: 16px; border-radius: 50%; border: 1px solid #999; background: #2b2b2b; font-size: 10px; font-weight: 700; line-height: 14px; text-align: center; }
```
